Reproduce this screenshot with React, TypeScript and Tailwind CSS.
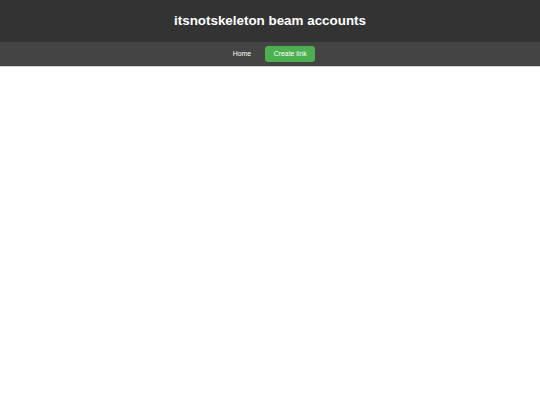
export default function App() {
  return (
    <div className="min-h-[405px] w-full bg-white" style={{ fontFamily: '"Liberation Sans", Arial, sans-serif' }}>
      <header className="h-[42px] bg-[#333333] flex items-center justify-center">
        <h1 className="text-[13.4px] font-bold text-white leading-none">itsnotskeleton beam accounts</h1>
      </header>
      <nav className="h-[25px] bg-[#444444] flex items-center justify-center gap-[14px] pl-[8px] border-b border-[#cfcfcf]">
        <a className="text-[6.9px] text-white leading-none">Home</a>
        <a className="h-[16px] w-[50px] rounded-[3px] bg-[#4caf50] text-[6.9px] text-white flex items-center justify-center leading-none">Create link</a>
      </nav>
    </div>
  );
}
